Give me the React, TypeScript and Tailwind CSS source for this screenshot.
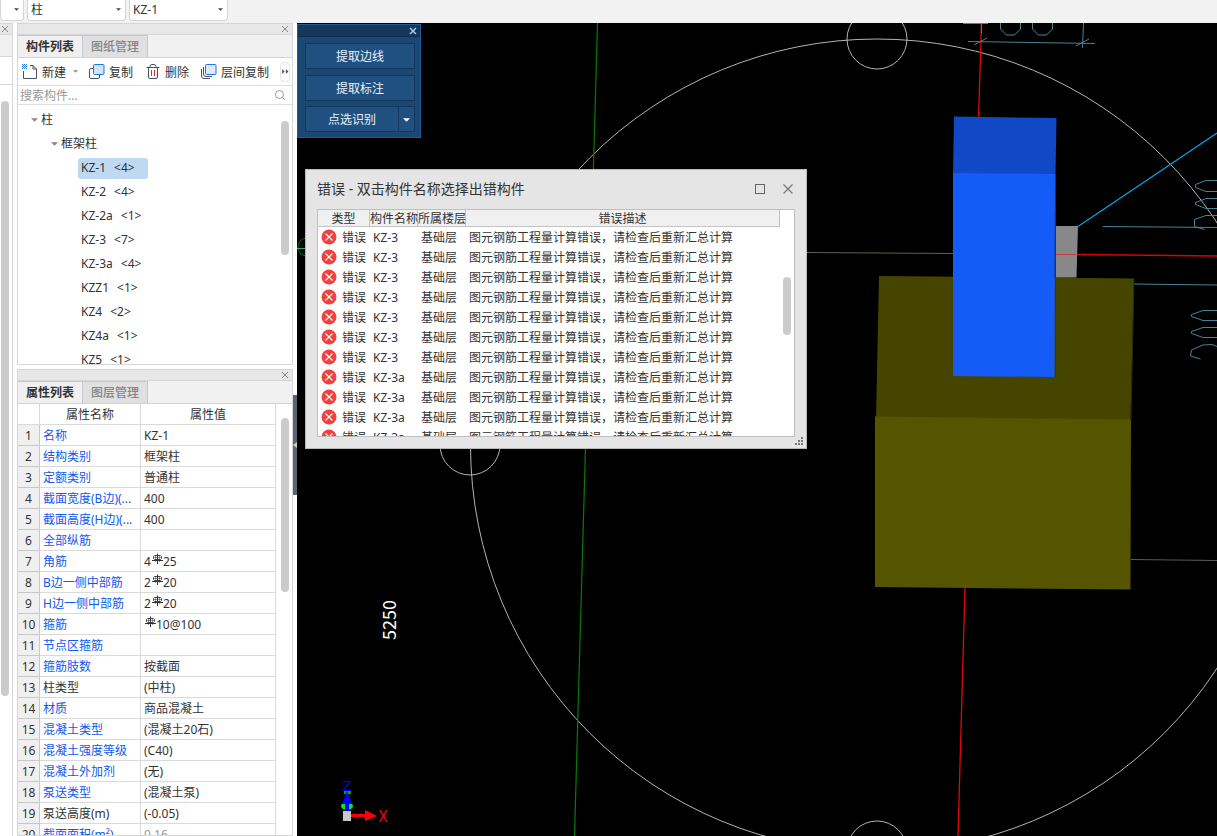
import type { ReactNode } from 'react'
import { clsx } from 'clsx'

const tree = [
  { name: 'KZ-1', count: 4 },
  { name: 'KZ-2', count: 4 },
  { name: 'KZ-2a', count: 1 },
  { name: 'KZ-3', count: 7 },
  { name: 'KZ-3a', count: 4 },
  { name: 'KZZ1', count: 1 },
  { name: 'KZ4', count: 2 },
  { name: 'KZ4a', count: 1 },
  { name: 'KZ5', count: 1 },
]

type Property = { name: string; value: string; plain?: boolean; muted?: boolean }

// A "#" in a value stands for the rebar grade symbol
const properties: Property[] = [
  { name: '名称', value: 'KZ-1' },
  { name: '结构类别', value: '框架柱' },
  { name: '定额类别', value: '普通柱' },
  { name: '截面宽度(B边)(...', value: '400' },
  { name: '截面高度(H边)(...', value: '400' },
  { name: '全部纵筋', value: '' },
  { name: '角筋', value: '4#25' },
  { name: 'B边一侧中部筋', value: '2#20' },
  { name: 'H边一侧中部筋', value: '2#20' },
  { name: '箍筋', value: '#10@100' },
  { name: '节点区箍筋', value: '' },
  { name: '箍筋肢数', value: '按截面' },
  { name: '柱类型', value: '(中柱)', plain: true },
  { name: '材质', value: '商品混凝土' },
  { name: '混凝土类型', value: '(混凝土20石)' },
  { name: '混凝土强度等级', value: '(C40)' },
  { name: '混凝土外加剂', value: '(无)' },
  { name: '泵送类型', value: '(混凝土泵)' },
  { name: '泵送高度(m)', value: '(-0.05)', plain: true },
  { name: '截面面积(m²)', value: '0.16', muted: true },
]

const errors = ['KZ-3', 'KZ-3', 'KZ-3', 'KZ-3', 'KZ-3', 'KZ-3', 'KZ-3', 'KZ-3a', 'KZ-3a', 'KZ-3a', 'KZ-3a']

function CloseIcon({ className = 'size-2' }: { className?: string }) {
  return (
    <svg viewBox="0 0 8 8" className={className} fill="none" stroke="currentColor">
      <path d="M1 1l6 6M7 1L1 7" />
    </svg>
  )
}

function Caret({ className }: { className?: string }) {
  return (
    <svg viewBox="0 0 8 4" className={className} fill="currentColor">
      <path d="M0 0h8L4 4z" />
    </svg>
  )
}

function RebarIcon() {
  return (
    <svg viewBox="0 0 12 12" className="-mt-2 inline-block size-3" fill="none" stroke="#333">
      <path d="M6.500 0.500v10.500M1 7.500h11" />
      <path d="M3.500 2.500h6l1 1v2l-1 1h-6l-1-1v-2z" strokeWidth="0.900" />
      <path d="M4.500 2v7M8.500 2v7M2 4.500h9" strokeWidth="0.500" />
    </svg>
  )
}

function ErrorIcon() {
  return (
    <svg viewBox="0 0 16 16" className="size-4 shrink-0" fill="none">
      <circle cx="8" cy="8" r="7.500" fill="#f0413f" />
      <path d="M4.500 4.500l7 7M11.500 4.500l-7 7" stroke="#fff" strokeWidth="1.100" />
    </svg>
  )
}

function Select({ label, value, className }: { label: string; value: string; className?: string }) {
  return (
    <div className={clsx('relative h-[21px]', className)}>
      <select aria-label={label} className="block size-full appearance-none rounded-b border border-t-0 border-[#d4d4d4] bg-white pl-[3px] pr-4 text-xs leading-4 text-[#333]">
        <option>{value}</option>
      </select>
      <Caret className="pointer-events-none absolute right-[5px] top-2 h-[3px] w-[5px] text-[#444]" />
    </div>
  )
}

function PanelHeader() {
  return (
    <div className="flex h-3 shrink-0 items-center justify-end border-y border-[#d6d6d6] bg-[#e7e7e7] pr-[3px]">
      <button aria-label="关闭" className="text-[#888]"><CloseIcon /></button>
    </div>
  )
}

function Tabs({ items }: { items: string[] }) {
  return (
    <div role="tablist" className="flex h-[23px] shrink-0 border-b border-[#d0d3d8] bg-[#f1f1f1]">
      {items.map((item, i) => (
        <button
          key={item}
          role="tab"
          aria-selected={i === 0}
          className={clsx(
            'h-[22px] w-[65px] border-r border-t border-[#c4c8ce] text-xs leading-5',
            i === 0 ? 'bg-[#f0f0f0] font-bold text-[#333]' : 'bg-[#e0e0e0] font-medium text-[#858585]'
          )}
        >
          {item}
        </button>
      ))}
    </div>
  )
}

function ToolButton({ icon, children }: { icon: ReactNode; children: ReactNode }) {
  return (
    <button className="flex shrink-0 items-center gap-1 text-xs text-[#333]">
      {icon}
      <span className="pt-[2px]">{children}</span>
    </button>
  )
}

function Toolbar() {
  return (
    <div className="flex h-7 shrink-0 items-center border-b border-[#dedede] pl-1">
      <ToolButton
        icon={
          <svg viewBox="0 0 16 16" className="size-4" fill="none">
            <path d="M1.500 7v7.500h13V5L11 1.500H8M11 1.500V5h3.500" stroke="#4a5161" />
            <path d="M0 .5h5M0 2.500h5M0 4.500h5" stroke="#1b76e0" strokeDasharray="1 1" />
            <path d="M1 1.500h4M1 3.500h4" stroke="#1b76e0" strokeDasharray="1 1" />
          </svg>
        }
      >
        新建
      </ToolButton>
      <Caret className="ml-[7px] h-[3px] w-[5px] text-[#888]" />
      <div className="ml-[11px]">
        <ToolButton
          icon={
            <svg viewBox="0 0 16 16" className="size-4" fill="none">
              <path d="M4 4.500H2A1.500 1.500 0 0 0 .5 6v7A1.500 1.500 0 0 0 2 14.500h7a1.500 1.500 0 0 0 1.500-1.500v-2" stroke="#4a5161" />
              <rect x="4.500" y=".5" width="10.500" height="10" rx="1" fill="#cfe1fb" stroke="#1b76e0" />
            </svg>
          }
        >
          复制
        </ToolButton>
      </div>
      <div className="ml-3">
        <ToolButton
          icon={
            <svg viewBox="0 0 16 16" className="size-4" fill="none">
              <path d="M1.500 3.500h13M5 3V2.500a2 2 0 0 1 2-2h2a2 2 0 0 1 2 2V3M3.500 4v9A1.500 1.500 0 0 0 5 14.500h6a1.500 1.500 0 0 0 1.500-1.500V4" stroke="#4a5161" />
              <path d="M6.500 6v6M9.500 6v6" stroke="#e8262c" />
            </svg>
          }
        >
          删除
        </ToolButton>
      </div>
      <div className="ml-3">
        <ToolButton
          icon={
            <svg viewBox="0 0 16 16" className="size-4" fill="none">
              <path d="M.5 5v7A2.500 2.500 0 0 0 3 14.500h6M2.500 3v7A2.500 2.500 0 0 0 5 12.500h6" stroke="#4a5161" />
              <rect x="4.500" y=".5" width="10.500" height="10" rx="1" fill="#dce9fc" stroke="#1b76e0" />
            </svg>
          }
        >
          层间复制
        </ToolButton>
      </div>
      <button aria-label="更多" className="ml-auto mr-[2px] flex h-5 w-[10px] items-center justify-center rounded border border-[#e4e4e4]">
        <svg viewBox="0 0 8 6" className="h-[5px] w-[7px] shrink-0" fill="#4a5161">
          <path d="M0 0l3 3-3 3zM4.500 0l3 3-3 3z" />
        </svg>
      </button>
    </div>
  )
}

function ComponentPanel() {
  return (
    <section className="flex shrink-0 flex-col border-x border-b border-[#d6d6d6] bg-white">
      <PanelHeader />
      <Tabs items={['构件列表', '图纸管理']} />
      <Toolbar />
      <div className="flex h-[19px] items-center border-b border-[#dedede] pl-[2px] pr-[7px]">
        <input aria-label="搜索构件" placeholder="搜索构件..." className="min-w-0 flex-1 pt-[2px] text-xs leading-4 outline-none placeholder:text-[#999]" />
        <svg viewBox="0 0 10 10" className="size-[10px]" fill="none" stroke="#999">
          <circle cx="4.500" cy="4.500" r="4" />
          <path d="M7.500 7.500L10 10" />
        </svg>
      </div>
      <div className="flex h-[259px] overflow-hidden pt-[3px]">
        <ul className="flex-1 text-xs leading-6 text-[#333]">
          <li>
            <span className="flex h-6 items-center gap-[3px] pl-[13px]">
              <Caret className="h-1 w-[7px] text-[#888]" />柱
            </span>
            <ul>
              <li>
                <span className="flex h-6 items-center gap-[3px] pl-[33px]">
                  <Caret className="h-1 w-[7px] text-[#888]" />框架柱
                </span>
                <ul>
                  {tree.map((item, i) => (
                    <li key={item.name} className="flex h-6 items-center pl-[60px]">
                      <span className={clsx('flex h-[21px] gap-2 rounded-[3px] px-[3px] leading-5', i === 0 && 'w-[70px] bg-[#c0d9f2]')}>
                        <span>{item.name}</span>
                        <span>&lt;{item.count}&gt;</span>
                      </span>
                    </li>
                  ))}
                </ul>
              </li>
            </ul>
          </li>
        </ul>
        <div className="mr-[3px] mt-[13px] h-[134px] w-2 rounded-full bg-[#cbcbcb]" />
      </div>
    </section>
  )
}

function PropertyValue({ value }: { value: string }) {
  const parts = value.split('#')
  if (parts.length === 1) return <>{value}</>
  return <>{parts[0]}<RebarIcon />{parts[1]}</>
}

function PropertyPanel() {
  const cell = 'h-[21px] whitespace-nowrap border-b border-r border-[#dadada] p-0 pt-[2px]'
  return (
    <section className="mt-1 flex min-h-0 flex-1 flex-col border-x border-b border-[#d6d6d6] bg-white">
      <PanelHeader />
      <Tabs items={['属性列表', '图层管理']} />
      <div className="flex min-h-0 flex-1 overflow-hidden">
        <table className="w-[258px] shrink-0 table-fixed border-separate border-spacing-0 self-start text-xs leading-4 text-[#333]">
          <thead>
            <tr>
              <td className={clsx(cell, 'w-[22px]')} />
              <th scope="col" className={clsx(cell, 'w-[101px] font-normal')}>属性名称</th>
              <th scope="col" className={clsx(cell, 'font-normal')}>属性值</th>
            </tr>
          </thead>
          <tbody>
            {properties.map((p, i) => (
              <tr key={p.name}>
                <th scope="row" className="h-[21px] border-b border-r border-[#c8c8c8] bg-[#f0f0f0] p-0 pt-[2px] font-normal">{i + 1}</th>
                <td className={clsx(cell, 'pl-[3px]', !p.plain && 'text-[#1058f0]')}>{p.name}</td>
                <td className={clsx(cell, 'pl-[3px]', p.muted && 'text-[#999]')}>
                  <PropertyValue value={p.value} />
                </td>
              </tr>
            ))}
          </tbody>
        </table>
        <div className="ml-auto mr-[3px] mt-[14px] h-[174px] w-2 shrink-0 rounded-full bg-[#cbcbcb]" />
      </div>
    </section>
  )
}

function Drawing() {
  return (
    <svg viewBox="297 23 920 813" preserveAspectRatio="xMinYMin slice" className="absolute inset-0 size-full" fill="none">
      {/* axis grid */}
      <g stroke="#b4b4b4">
        <circle cx="877" cy="445.500" r="406.500" />
        <circle cx="877" cy="39" r="30" />
        <circle cx="470" cy="445" r="30" />
        <circle cx="877" cy="851" r="30" />
      </g>
      <path d="M597.500 23L574.500 836" stroke="#087a08" strokeWidth="1.200" />
      <circle cx="307" cy="247" r="9" stroke="#087a08" />
      <path d="M297 248.500h10" stroke="#2aa0a0" />
      <path d="M806 252.500L954 253.500" stroke="#4e6a4e" />
      <path d="M1131 559.500L1217 560.500" stroke="#5a5a5a" />
      <path d="M981.500 23L978.500 118M965 587L958 836" stroke="#e00808" strokeWidth="1.300" />

      {/* dimensions */}
      <g stroke="#488496">
        <path d="M963 23.500h25M981.500 23v10M1083.500 23L1082.500 48M968 41.500L1095 43.500M974 45l13-7M1076 46l13-7" />
        <path d="M1000.500 23v6l6 6h8l6-6v-6M1032.500 23v6l6 6h8l6-6v-6" />
        <path d="M1103 226.500L1217 227.500M1134 284L1217 285" />
        <path d="M1217 180.500h-11l-10.500 4v3l10.500 4h11M1217 198.500h-11l-10.500 4v2l10.500 4h11M1217 215.500h-11l-11.500 4v7l10 3" />
        <path d="M1217 310.500h-14l-11.500 4v2l11.500 4h14M1217 327.500h-14l-11.500 4v2l11.500 4h14M1217 346.500l-5-2-9 .5-11.500 5-1 6 10 3" />
      </g>
      <path d="M1078 226.500L1217 133" stroke="#00a8e8" strokeWidth="1.200" />

      {/* footing and column */}
      <path d="M879 276L1134 278.500L1130.500 420H876z" fill="#454500" />
      <path d="M875 416.500L1131 419.500L1130.500 589.500L875 587z" fill="#555500" />
      <path d="M1131 419.500L1134 278.500" stroke="#2c2c00" />
      <path d="M1056 226h22l-1.500 51.500H1056z" fill="#888" />
      <path d="M1056 254.500h20" stroke="#c83a3a" />
      <path d="M1077 254.500L1217 256" stroke="#d80505" strokeWidth="1.300" />
      <path d="M954 116.500L1056.500 118L1055.500 175H953z" fill="#1148c6" />
      <path d="M953 173L1055 174L1054.500 377L953 376z" fill="#155bf8" />
      <path d="M1055.500 174v203" stroke="#0d3690" />

      <text x="0" y="0" transform="translate(396 640) rotate(-90)" fill="#fff" fontSize="18" fontFamily="'Noto Sans CJK SC', sans-serif">5250</text>

      {/* view orientation gizmo */}
      <ellipse cx="347" cy="806" rx="6" ry="4" fill="#00e828" />
      <path d="M344 791h7v3h-7z" fill="#00a020" />
      <path d="M347 791l5 13h-3v10h-4v-10h-3z" fill="#00f" />
      <path d="M343 811h8v10h-8z" fill="#c8c8c8" />
      <path d="M351 814h14v-4l12 6-12 5v-4h-14z" fill="#f00" />
      <text x="347" y="791" textAnchor="middle" fill="#0000f0" fontSize="15" fontFamily="'Liberation Sans', sans-serif">Z</text>
      <text x="383" y="822" textAnchor="middle" fill="#f00000" fontSize="16" fontFamily="'Noto Sans CJK SC', sans-serif">X</text>
    </svg>
  )
}

function ToolPalette() {
  const button = 'h-[26px] border border-[#14375c] bg-[#1f5080] pt-px text-center leading-6'
  return (
    <div className="absolute left-0 top-px w-[124px] border border-[#1d5c9c] bg-[#1a4872] pb-[5px] text-xs text-[#e8f1fa]">
      <div className="flex h-3 items-center justify-end border-b border-[#102c4c] bg-[#15375c] pr-[3px]">
        <button aria-label="关闭" className="text-[#a8c8e8]"><CloseIcon className="size-2 stroke-[1.5]" /></button>
      </div>
      <div className="flex flex-col gap-[6px] pl-[7px] pr-[5px] pt-[6px]">
        <button className={button}>提取边线</button>
        <button className={button}>提取标注</button>
        <div className="-mt-px flex">
          <button className={clsx(button, 'flex-1')}>点选识别</button>
          <button aria-label="更多选项" className={clsx(button, 'flex w-4 items-center justify-center border-l-0')}>
            <Caret className="h-1 w-[7px] shrink-0 text-white" />
          </button>
        </div>
      </div>
    </div>
  )
}

function ErrorDialog() {
  const head = 'h-[17px] border-b border-r border-[#c4c4c4] p-0 pt-px font-normal whitespace-nowrap leading-[15px]'
  const cell = 'h-5 whitespace-nowrap p-0 pl-[3px] pt-[2px]'
  return (
    <div role="dialog" aria-labelledby="error-title" className="absolute left-2 top-[146px] flex w-[502px] flex-col border border-[#b8b8b8] bg-[#e5e5e5] px-[11px] pb-[11px] text-[#333]">
      <div className="flex h-[39px] items-center pb-[2px]">
        <h2 id="error-title" className="flex-1 text-sm leading-5">错误 - 双击构件名称选择出错构件</h2>
        <button aria-label="最大化" className="mr-[17px] size-[10px] border border-[#666]" />
        <button aria-label="关闭" className="mr-px text-[#777]"><CloseIcon className="size-3 stroke-[0.8]" /></button>
      </div>
      <div className="flex h-[228px] overflow-hidden border border-[#bfbfbf] bg-white">
        <table className="w-[462px] table-fixed border-separate border-spacing-0 self-start text-xs">
          <thead className="bg-[#f0f0f0]">
            <tr>
              <th scope="col" className={clsx(head, 'w-[52px]')}>类型</th>
              <th scope="col" className={clsx(head, 'w-12')}>构件名称</th>
              <th scope="col" className={clsx(head, 'w-12')}>所属楼层</th>
              <th scope="col" className={head}>错误描述</th>
            </tr>
          </thead>
          <tbody className="leading-4">
            {errors.map((name, i) => (
              <tr key={i}>
                <td className="h-5 whitespace-nowrap p-0 pl-[3px]">
                  <span className="flex items-center gap-[5px]">
                    <ErrorIcon />
                    <span className="pt-[2px]">错误</span>
                  </span>
                </td>
                <td className={cell}>{name}</td>
                <td className={cell}>基础层</td>
                <td className={cell}>图元钢筋工程量计算错误，请检查后重新汇总计算</td>
              </tr>
            ))}
          </tbody>
        </table>
        <div className="ml-auto mr-[3px] mt-[67px] h-[58px] w-2 shrink-0 rounded-full bg-[#cbcbcb]" />
      </div>
      <svg viewBox="0 0 8 8" className="absolute bottom-[3px] right-[3px] size-2" fill="#777">
        <path d="M6 0h2v2H6zM3 3h2v2H3zM6 3h2v2H6zM0 6h2v2H0zM3 6h2v2H3zM6 6h2v2H6z" />
      </svg>
    </div>
  )
}

export default function App() {
  return (
    <div className="flex h-screen flex-col overflow-hidden bg-white font-['Noto_Sans','Noto_Sans_CJK_SC',sans-serif]">
      <header className="flex h-[23px] shrink-0 gap-[3px] bg-[#f2f2f2]">
        <Select label="楼层" value="" className="w-6" />
        <Select label="构件类型" value="柱" className="w-[99px]" />
        <Select label="构件名称" value="KZ-1" className="w-[99px]" />
      </header>

      <div className="flex min-h-0 flex-1">
        {/* neighbouring panel, mostly cut off */}
        <aside className="flex w-[13px] shrink-0 flex-col border-r border-[#d6d6d6]">
          <PanelHeader />
          <div className="h-[22px] shrink-0 border-b border-[#d6d6d6] bg-[#f1f1f1]" />
          <div className="h-7 shrink-0 border-b border-[#d6d6d6]" />
          <div className="ml-px mt-4 h-[595px] w-2 shrink-0 rounded-full bg-[#cbcbcb]" />
        </aside>

        <div className="ml-1 flex w-[276px] shrink-0 flex-col">
          <ComponentPanel />
          <PropertyPanel />
        </div>

        <div className="w-1 shrink-0 pt-[372px]">
          <button aria-label="收起" className="flex h-[100px] w-1 items-center justify-center bg-[#5b6470]">
            <svg viewBox="0 0 4 6" className="h-[6px] w-1" fill="#ccc"><path d="M4 0v6L0 3z" /></svg>
          </button>
        </div>

        <main className="relative min-w-0 flex-1 overflow-hidden bg-black">
          <Drawing />
          <ToolPalette />
          <ErrorDialog />
        </main>
      </div>
    </div>
  )
}
